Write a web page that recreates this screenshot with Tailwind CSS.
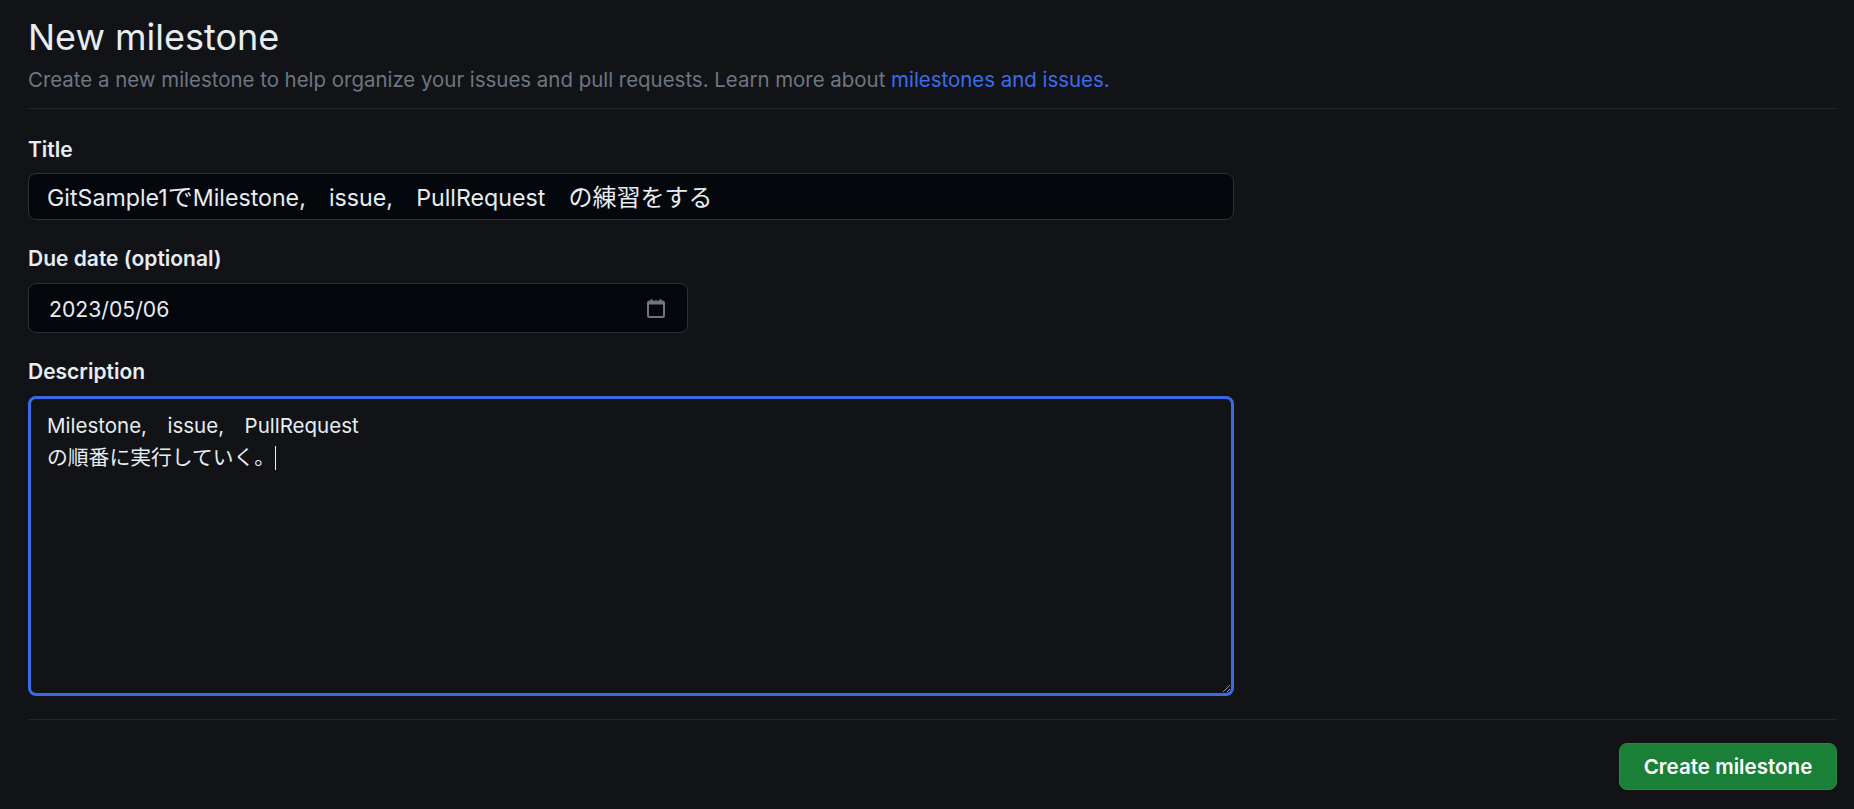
<!DOCTYPE html>
<html lang="ja">
<head>
<meta charset="utf-8">
<script src="https://cdn.jsdelivr.net/npm/@tailwindcss/browser@4"></script>
<title>New milestone</title>
</head>
<body class="bg-[#111317] h-[809px] overflow-hidden font-['Inter','Noto_Sans_CJK_JP',sans-serif] text-[#e6edf3]">
<main class="pl-[28px] pr-[17px] pt-[14px]">
  <header class="h-[95px] border-b border-[#23272e]">
    <h1 class="text-[36px] leading-[46px] font-normal">New milestone</h1>
    <p class="text-[20.43px] leading-[28px] mt-[6px] text-[#6e7681]">Create a new milestone to help organize your issues and pull requests. Learn more about <a class="text-[#3b6cf0]">milestones and issues</a><span class="text-[#3b6cf0]">.</span></p>
  </header>
  <form class="w-[1206px]">
    <label class="block mt-[28px] text-[21px] leading-[26px] font-semibold">Title</label>
    <div class="mt-[10px] h-[47px] flex items-center px-[18px] pt-[2px] rounded-[8px] border border-[#2d323a] bg-[#04070b] text-[23.2px]"><span>GitSample1<span class="text-[25px]">で</span>Milestone,　issue,　PullRequest　<span class="text-[24px]">の練習をする</span></span></div>
    <label class="block mt-[26px] text-[21px] leading-[26px] font-semibold">Due date (optional)</label>
    <div class="mt-[11px] w-[660px] h-[50px] flex items-center justify-between pl-[20px] pr-[22px] rounded-[8px] border border-[#2d323a] bg-[#04070b] text-[21.2px]">
      <span class="pt-[3px]">2023/05/06</span>
      <svg width="18" height="19" viewBox="0 0 18 19" class="text-[#6e7681]" fill="none" stroke="currentColor">
        <rect x="1" y="2.5" width="16" height="15.5" rx="1.5" stroke-width="2"/>
        <rect x="1" y="2" width="16" height="3.5" fill="currentColor" stroke="none"/>
        <path d="M4.5 0V2.5M13.5 0V2.5" stroke-width="1.6"/>
      </svg>
    </div>
    <label class="block mt-[26px] text-[21px] leading-[26px] font-semibold">Description</label>
    <div class="relative mt-[11px] h-[300px] rounded-[8px] border-[3px] border-[#3b6ae8] px-[16px] pt-[11px] text-[20.5px] leading-[32px]">
      <div>Milestone,　issue,　PullRequest</div>
      <div class="flex items-center"><span class="text-[20.8px]">の順番に実行していく。</span><span class="inline-block w-px h-[24px] bg-[#e6edf3]"></span></div>
      <svg class="absolute right-0 bottom-0" width="9" height="9" viewBox="0 0 9 9" stroke="#8b949e" fill="none"><path d="M1 8L8 1M5 8L8 5"/></svg>
    </div>
  </form>
  <div class="mt-[23px] border-t border-[#23272e] pt-[23px] flex justify-end">
    <button class="w-[218px] h-[47px] pt-[1px] rounded-[8px] bg-[#1a7f37] border border-[#2a8a45] text-white text-[20.6px] font-semibold">Create milestone</button>
  </div>
</main>
</body>
</html>
